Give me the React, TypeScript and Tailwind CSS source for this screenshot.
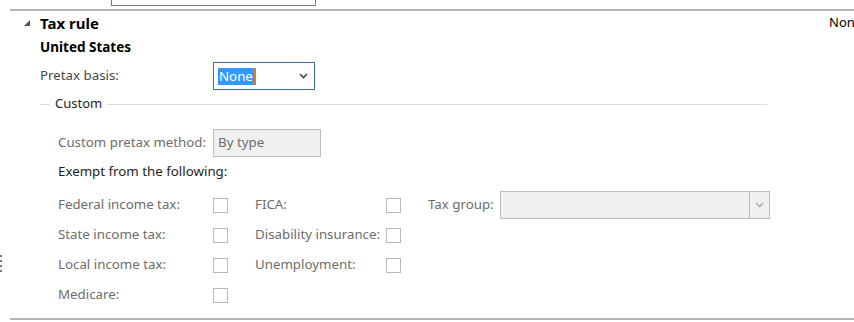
function Chevron({ color }: { color: string }) {
  return (
    <svg width="9" height="6" viewBox="0 0 9 6" fill="none">
      <polyline points="1,1 4.5,4.5 8,1" stroke={color} strokeWidth="1.6" />
    </svg>
  );
}

function Check() {
  return <div className="h-[15px] w-[15px] border border-[#b9b9b9] bg-white" />;
}

const rows: [string, string | null][] = [
  ["Federal income tax:", "FICA:"],
  ["State income tax:", "Disability insurance:"],
  ["Local income tax:", "Unemployment:"],
  ["Medicare:", null],
];

export default function App() {
  return (
    <div
      className="relative flex h-[322px] w-[854px] flex-col overflow-hidden bg-white text-[13.3px] text-[#6d6d6d]"
      style={{ fontFamily: '"Noto Sans", "Open Sans", sans-serif' }}
    >
      {/* box from the section above */}
      <div className="ml-[111px] h-[6px] w-[205px] border-x border-b border-[#7a7a7a]" />
      <div className="ml-[10px] mt-[3px] h-[2px] bg-[#b4b4b4]" />

      {/* header */}
      <div className="mt-[2px] flex h-[20px] items-center">
        <svg className="ml-[24px]" width="6" height="6" viewBox="0 0 6 6">
          <polygon points="6,0 6,6 0,6" fill="#555" />
        </svg>
        <span className="ml-[10px] text-[15px] font-bold leading-none text-black">Tax rule</span>
        <span className="ml-auto w-[25px] whitespace-nowrap text-[13px] text-black">Non</span>
      </div>

      <div className="ml-[40px] mt-[6px] text-[13.5px] font-bold leading-[16px] text-black">
        United States
      </div>

      <div className="ml-[40px] mt-[7px] flex h-[28px] items-center">
        <span className="w-[173px] text-[#4a4a4a]">Pretax basis:</span>
        <div className="flex h-[28px] w-[102px] items-center border border-[#3d6b98] pl-[4px] pr-[6px]">
          <span className="bg-[#3399ff] px-[1px] leading-[17px] text-white">None</span>
          <span className="h-[17px] w-[2px] bg-[#e8791d]" />
          <span className="ml-auto">
            <Chevron color="#444" />
          </span>
        </div>
      </div>

      {/* Custom group */}
      <div className="ml-[40px] mt-[4px] flex h-[20px] items-center">
        <div className="h-[1px] w-[10px] bg-[#dcdcdc]" />
        <span className="px-[5px] text-[13px] text-[#1e1e1e]">Custom</span>
        <div className="h-[1px] w-[660px] bg-[#dcdcdc]" />
      </div>

      <div className="ml-[58px] mt-[15px] flex h-[28px] items-center">
        <span className="w-[155px]">Custom pretax method:</span>
        <div className="flex h-[28px] w-[108px] items-center border border-[#bdbdbd] bg-[#f0f0f0] pl-[4px]">
          By type
        </div>
      </div>

      <div className="ml-[58px] mt-[5px] leading-[18px] text-[#1e1e1e]">Exempt from the following:</div>

      <div className="ml-[58px] mt-[10px] flex flex-col">
        {rows.map(([a, b], i) => (
          <div key={a} className="flex h-[30px] items-center">
            <span className="w-[155px]">{a}</span>
            <Check />
            {b && (
              <>
                <span className="ml-[27px] w-[131px] whitespace-nowrap">{b}</span>
                <Check />
              </>
            )}
            {i === 0 && (
              <>
                <span className="ml-[27px] w-[72px]">Tax group:</span>
                <div className="flex h-[28px] w-[270px] items-center border border-[#bcbcbc] bg-[#f0f0f0]">
                  <div className="ml-auto h-full w-[1px] bg-[#bcbcbc]" />
                  <span className="flex w-[19px] justify-center">
                    <Chevron color="#b0b0b0" />
                  </span>
                </div>
              </>
            )}
          </div>
        ))}
      </div>

      <div className="ml-[10px] mt-auto mb-[2px] h-[2px] bg-[#b4b4b4]" />

      {/* splitter grip */}
      <div className="absolute left-0 top-[255px] flex flex-col gap-[3px]">
        {[0, 1, 2, 3].map((d) => (
          <div key={d} className="h-[2px] w-[2px] bg-[#7a7a7a]" />
        ))}
      </div>
    </div>
  );
}
